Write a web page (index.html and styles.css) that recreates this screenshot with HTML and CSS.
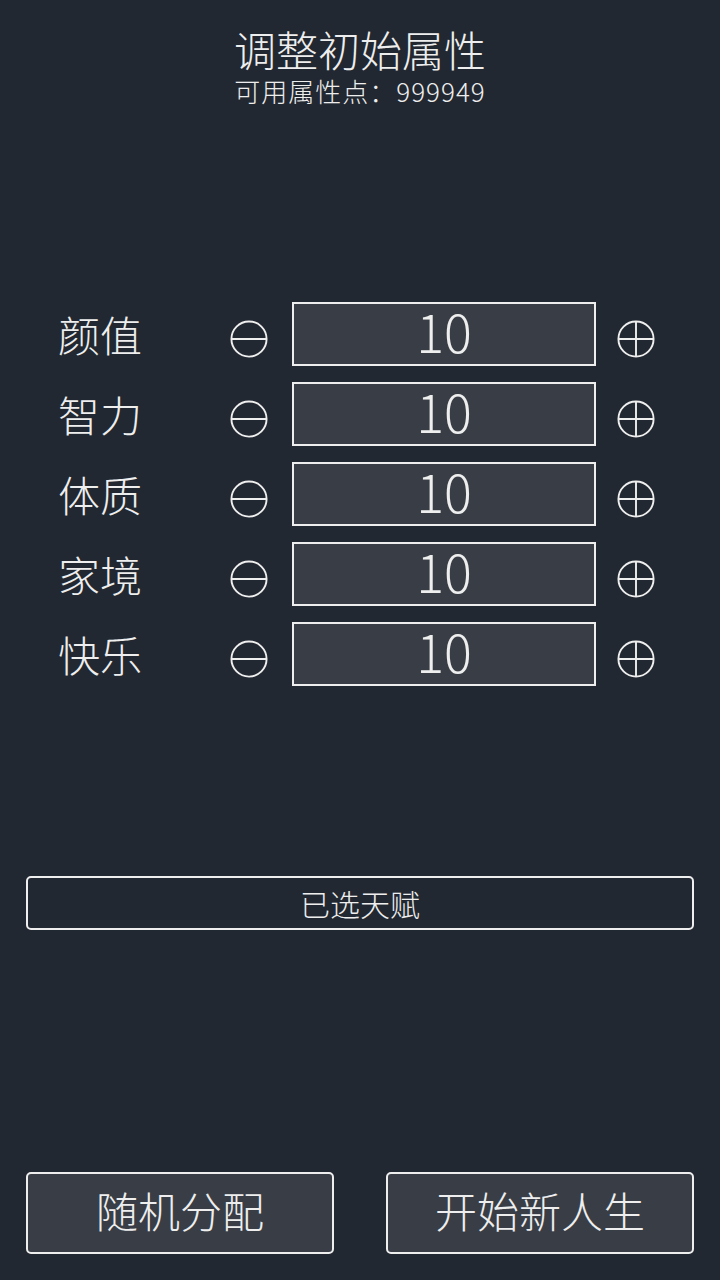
FILE: index.html
```html
<!DOCTYPE html>
<html lang="zh-CN">
<head>
  <meta charset="UTF-8" />
  <meta name="viewport" content="width=device-width, initial-scale=1.0"/>
  <title>调整初始属性</title>
  <link rel="stylesheet" href="styles.css">
</head>
<body>

  <div class="page">
    <header class="head">
      <h1>调整初始属性</h1>
      <div class="points">可用属性点：999949</div>
    </header>

    <div class="props">
      <div class="prop">
        <span class="prop-name">颜值</span>
        <button class="step" aria-label="减少">
          <svg viewBox="0 0 40 40"><circle cx="20" cy="20" r="18.5"/><path d="M1.5 20h37"/></svg>
        </button>
        <div class="value">10</div>
        <button class="step" aria-label="增加">
          <svg viewBox="0 0 40 40"><circle cx="20" cy="20" r="18.5"/><path d="M1.5 20h37M20 1.5v37"/></svg>
        </button>
      </div>
      <div class="prop">
        <span class="prop-name">智力</span>
        <button class="step" aria-label="减少">
          <svg viewBox="0 0 40 40"><circle cx="20" cy="20" r="18.5"/><path d="M1.5 20h37"/></svg>
        </button>
        <div class="value">10</div>
        <button class="step" aria-label="增加">
          <svg viewBox="0 0 40 40"><circle cx="20" cy="20" r="18.5"/><path d="M1.5 20h37M20 1.5v37"/></svg>
        </button>
      </div>
      <div class="prop">
        <span class="prop-name">体质</span>
        <button class="step" aria-label="减少">
          <svg viewBox="0 0 40 40"><circle cx="20" cy="20" r="18.5"/><path d="M1.5 20h37"/></svg>
        </button>
        <div class="value">10</div>
        <button class="step" aria-label="增加">
          <svg viewBox="0 0 40 40"><circle cx="20" cy="20" r="18.5"/><path d="M1.5 20h37M20 1.5v37"/></svg>
        </button>
      </div>
      <div class="prop">
        <span class="prop-name">家境</span>
        <button class="step" aria-label="减少">
          <svg viewBox="0 0 40 40"><circle cx="20" cy="20" r="18.5"/><path d="M1.5 20h37"/></svg>
        </button>
        <div class="value">10</div>
        <button class="step" aria-label="增加">
          <svg viewBox="0 0 40 40"><circle cx="20" cy="20" r="18.5"/><path d="M1.5 20h37M20 1.5v37"/></svg>
        </button>
      </div>
      <div class="prop">
        <span class="prop-name">快乐</span>
        <button class="step" aria-label="减少">
          <svg viewBox="0 0 40 40"><circle cx="20" cy="20" r="18.5"/><path d="M1.5 20h37"/></svg>
        </button>
        <div class="value">10</div>
        <button class="step" aria-label="增加">
          <svg viewBox="0 0 40 40"><circle cx="20" cy="20" r="18.5"/><path d="M1.5 20h37M20 1.5v37"/></svg>
        </button>
      </div>
    </div>

    <div class="talents">已选天赋</div>

    <div class="actions">
      <button class="btn">随机分配</button>
      <button class="btn">开始新人生</button>
    </div>
  </div>

</body>
</html>
```

FILE: styles.css
```css
:root {
  --bg: #222831;
  --panel: #393e46;
  --text: #eeeeee;
  --line: #eeeeee;
}

* {
  box-sizing: border-box;
  margin: 0;
  padding: 0;
}

body {
  background: var(--bg);
  color: var(--text);
  font-family: "Noto Sans CJK SC", "Noto Sans", sans-serif;
  font-weight: 300;
}

.page {
  min-height: 1280px;
  display: flex;
  flex-direction: column;
}

/* Header */
.head {
  text-align: center;
  padding-top: 26px;
}

h1 {
  font-size: 42px;
  font-weight: 300;
  line-height: 46px;
}

.points {
  margin-top: 4px;
  font-size: 26px;
  line-height: 30px;
  letter-spacing: 1px;
}

/* Property rows */
.props {
  margin-top: 196px;
  display: flex;
  flex-direction: column;
  gap: 16px;
}

.prop {
  display: flex;
  align-items: center;
  height: 64px;
  padding-left: 58px;
}

.prop-name {
  width: 172px;
  font-size: 42px;
  line-height: 1;
}

.step {
  width: 38px;
  height: 38px;
  margin-top: 10px;
  background: none;
  border: none;
  cursor: pointer;
}

.step svg {
  display: block;
  width: 38px;
  height: 38px;
  fill: none;
  stroke: var(--line);
  stroke-width: 2;
}

.value {
  width: 304px;
  height: 64px;
  margin: 0 21px 0 24px;
  background: var(--panel);
  border: 2px solid var(--line);
  font-size: 52px;
  font-weight: 300;
  line-height: 54px;
  text-align: center;
}

/* Talents */
.talents {
  margin: 190px 26px 0;
  height: 54px;
  border: 2px solid var(--line);
  border-radius: 5px;
  font-size: 30px;
  line-height: 50px;
  text-align: center;
}

/* Bottom actions */
.actions {
  margin-top: auto;
  padding: 0 26px 26px;
  display: flex;
  justify-content: space-between;
}

.btn {
  width: 308px;
  height: 82px;
  padding-bottom: 8px;
  background: var(--panel);
  color: var(--text);
  border: 2px solid var(--line);
  border-radius: 5px;
  font-family: inherit;
  font-weight: 300;
  font-size: 42px;
  cursor: pointer;
}
```
